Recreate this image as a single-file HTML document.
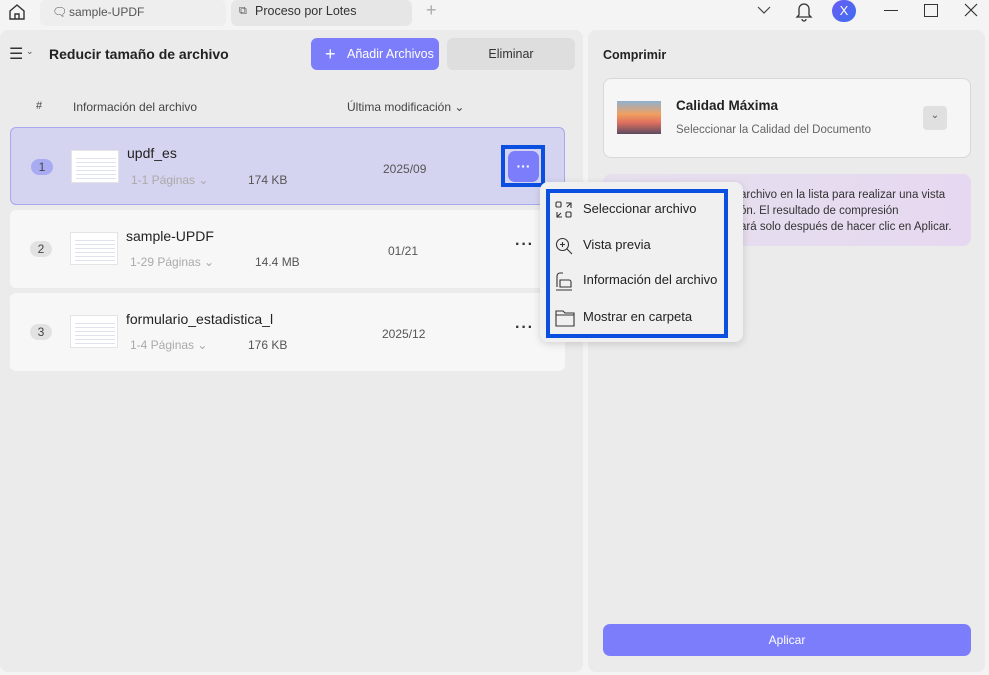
<!DOCTYPE html>
<html><head><meta charset="utf-8"><style>
*{box-sizing:border-box;margin:0;padding:0}
body{width:989px;height:675px;background:#f4f4f4;font-family:"Liberation Sans",sans-serif;position:relative;overflow:hidden;color:#222}
.abs{position:absolute}
.panel{background:#ebebeb;border-radius:8px}
.row{position:absolute;left:10px;width:555px;height:78px;background:#f7f7f7;border-radius:6px}
.num{position:absolute;left:20px;top:31px;width:22px;height:16px;border-radius:8px;background:#e2e2e2;font-size:12px;text-align:center;line-height:16px;color:#444}
.thumb{position:absolute;left:60px;top:22px;width:48px;height:33px;background:#fff;border:1px solid #e4e4e4;background-image:repeating-linear-gradient(#fff 0 3px,#dfe1ef 3px 4px);background-size:40px 26px;background-position:4px 4px;background-repeat:no-repeat}
.fname{position:absolute;left:116px;top:18px;font-size:14px;color:#222}
.meta{position:absolute;top:45px;font-size:12px;color:#555}
.pg{left:120px;color:#aaa}
.date{position:absolute;font-size:12px;color:#555;top:34px}
.dots{position:absolute;left:505px;top:26px;font-size:16px;letter-spacing:1px;font-weight:bold;color:#333}
.mi{position:absolute;left:555px;font-size:13px;color:#222}
.mi span{position:absolute;left:28px;top:0;white-space:nowrap}
</style></head><body>
<svg class="abs" style="left:7px;top:2px" width="20" height="20" viewBox="0 0 20 20"><path d="M3 9L10 3l7 6v8H3z M8 17v-5h4v5" fill="none" stroke="#333" stroke-width="1.4"/></svg>
<div class="abs" style="left:40px;top:0;width:186px;height:26px;background:#eeeeee;border-radius:6px"></div>
<div class="abs" style="left:52px;top:5px;font-size:12px;color:#555">🗨︎</div>
<div class="abs" style="left:69px;top:5px;font-size:12px;color:#555">sample-UPDF</div>
<div class="abs" style="left:231px;top:0;width:181px;height:26px;background:#e6e6e6;border-radius:6px"></div>
<div class="abs" style="left:239px;top:5px;font-size:11px;color:#555">⧉</div>
<div class="abs" style="left:255px;top:4px;font-size:12.5px;color:#333">Proceso por Lotes</div>
<div class="abs" style="left:426px;top:0px;font-size:18px;color:#aaa">+</div>
<svg class="abs" style="left:757px;top:5px" width="14" height="10"><path d="M1 2l6 6 6-6" fill="none" stroke="#444" stroke-width="1.2"/></svg>
<svg class="abs" style="left:795px;top:0" width="18" height="22"><path d="M4 15V9a5 5 0 0110 0v6l2 2H2z M7 19a2 2 0 004 0" fill="none" stroke="#333" stroke-width="1.3"/></svg>
<div class="abs" style="left:832px;top:0;width:24px;height:22px;border-radius:12px;background:linear-gradient(135deg,#6b5cf5,#3c6ff0);color:#fff;font-size:13px;text-align:center;line-height:22px">X</div>
<div class="abs" style="left:884px;top:10px;width:14px;height:1px;background:#333"></div>
<div class="abs" style="left:924px;top:4px;width:14px;height:13px;border:1.3px solid #333"></div>
<svg class="abs" style="left:964px;top:3px" width="14" height="14"><path d="M1 1l12 12M13 1L1 13" stroke="#333" stroke-width="1.2"/></svg>

<div class="abs panel" style="left:0;top:30px;width:583px;height:642px"></div>
<div class="abs panel" style="left:588px;top:30px;width:397px;height:642px"></div>

<div class="abs" style="left:9px;top:44px;font-size:16px;color:#333">☰</div>
<div class="abs" style="left:26px;top:46px;font-size:9px;color:#555">⌄</div>
<div class="abs" style="left:49px;top:46px;font-size:14px;font-weight:bold;color:#222">Reducir tamaño de archivo</div>
<div class="abs" style="left:311px;top:38px;width:128px;height:32px;background:#7b7dfa;border-radius:6px;color:#fff;font-size:12.5px;line-height:32px"><span style="position:absolute;left:14px;font-size:18px">+</span><span style="position:absolute;left:36px">Añadir Archivos</span></div>
<div class="abs" style="left:447px;top:38px;width:128px;height:32px;background:#dedede;border-radius:6px;color:#333;font-size:12.5px;line-height:32px;text-align:center">Eliminar</div>
<div class="abs" style="left:36px;top:100px;font-size:11px;color:#444">#</div>
<div class="abs" style="left:73px;top:100px;font-size:12px;color:#444">Información del archivo</div>
<div class="abs" style="left:347px;top:100px;font-size:12px;color:#444">Última modificación ⌄</div>

<div class="row" style="top:127px;background:#d4d4f0;border:1px solid #a7a8ee">
<div class="num" style="background:#a9abf2">1</div><div class="thumb"></div>
<div class="fname" style="top:17px">updf_es</div><div class="meta pg">1-1 Páginas ⌄</div><div class="meta" style="left:237px">174 KB</div>
<div class="date" style="left:372px">2025/09</div>
<div class="abs" style="left:490px;top:17px;width:44px;height:42px;border:4px solid #0a4fe0"></div>
<div class="abs" style="left:497px;top:23px;width:31px;height:31px;background:#7b7dfa;border-radius:7px;color:#fff;text-align:center;font-size:14px;line-height:31px;font-weight:bold">···</div>
</div>
<div class="row" style="top:210px"><div class="num">2</div><div class="thumb"></div>
<div class="fname">sample-UPDF</div><div class="meta pg">1-29 Páginas ⌄</div><div class="meta" style="left:245px">14.4 MB</div>
<div class="date" style="left:378px">01/21</div><div class="dots">···</div></div>
<div class="row" style="top:293px"><div class="num">3</div><div class="thumb"></div>
<div class="fname">formulario_estadistica_l</div><div class="meta pg">1-4 Páginas ⌄</div><div class="meta" style="left:238px">176 KB</div>
<div class="date" style="left:372px">2025/12</div><div class="dots">···</div></div>

<div class="abs" style="left:603px;top:48px;font-size:12.5px;font-weight:bold;color:#222">Comprimir</div>
<div class="abs" style="left:603px;top:78px;width:368px;height:80px;background:#f6f6f6;border:1px solid #d8d8d8;border-radius:8px"></div>
<div class="abs" style="left:617px;top:101px;width:44px;height:33px;background:linear-gradient(#8fb1d0 0%,#f0a060 40%,#e07060 65%,#5a4a60 100%)"></div>
<div class="abs" style="left:676px;top:98px;font-size:13.5px;font-weight:bold;color:#222">Calidad Máxima</div>
<div class="abs" style="left:676px;top:124px;font-size:11.5px;color:#666">Seleccionar la Calidad del Documento</div>
<div class="abs" style="left:923px;top:106px;width:24px;height:24px;background:#e0e0e0;border-radius:4px;text-align:center;font-size:10px;color:#555;line-height:20px">⌄</div>
<div class="abs" style="left:603px;top:174px;width:368px;height:72px;background:linear-gradient(90deg,#e6e0ee,#e6d8f0);border-radius:8px"></div>
<div class="abs" style="left:740px;top:187px;font-size:11.5px;color:#333;line-height:16px">archivo en la lista para realizar una vista<br>ón. El resultado de compresión<br>ará solo después de hacer clic en Aplicar.</div>
<div class="abs" style="left:603px;top:624px;width:368px;height:32px;background:#7b7dfa;border-radius:7px;color:#fff;font-size:12px;text-align:center;line-height:32px">Aplicar</div>

<div class="abs" style="left:540px;top:182px;width:203px;height:160px;background:#f0f0f0;border-radius:8px;box-shadow:0 2px 8px rgba(0,0,0,.15)"></div>
<div class="abs" style="left:546px;top:189px;width:182px;height:149px;border:4px solid #0a4fe0"></div>
<div class="mi" style="top:201px"><svg width="18" height="18" viewBox="0 0 18 18" fill="none" stroke="#333" stroke-width="1.1"><rect x="1" y="1" width="5" height="5" rx="1"/><rect x="11" y="11" width="5" height="5" rx="1"/><path d="M11 2h5v5M16 2l-4 4M2 11v5h5M2 16l4-4"/></svg><span>Seleccionar archivo</span></div>
<div class="mi" style="top:237px"><svg width="18" height="18" viewBox="0 0 18 18" fill="none" stroke="#333" stroke-width="1.1"><circle cx="7.5" cy="7.5" r="6"/><path d="M12 12l5 5M7.5 5v5M5 7.5h5"/></svg><span>Vista previa</span></div>
<div class="mi" style="top:272px"><svg width="18" height="20" viewBox="0 0 18 20" fill="none" stroke="#333" stroke-width="1.1"><path d="M2 15V4a3 3 0 013-3h3M5 8h9a2 2 0 012 2v5H5zM1 18h16"/></svg><span>Información del archivo</span></div>
<div class="mi" style="top:309px"><svg width="20" height="18" viewBox="0 0 20 18" fill="none" stroke="#333" stroke-width="1.1"><path d="M1 2h7l2 2h9v13H1zM1 6h18"/></svg><span>Mostrar en carpeta</span></div>
</body></html>
